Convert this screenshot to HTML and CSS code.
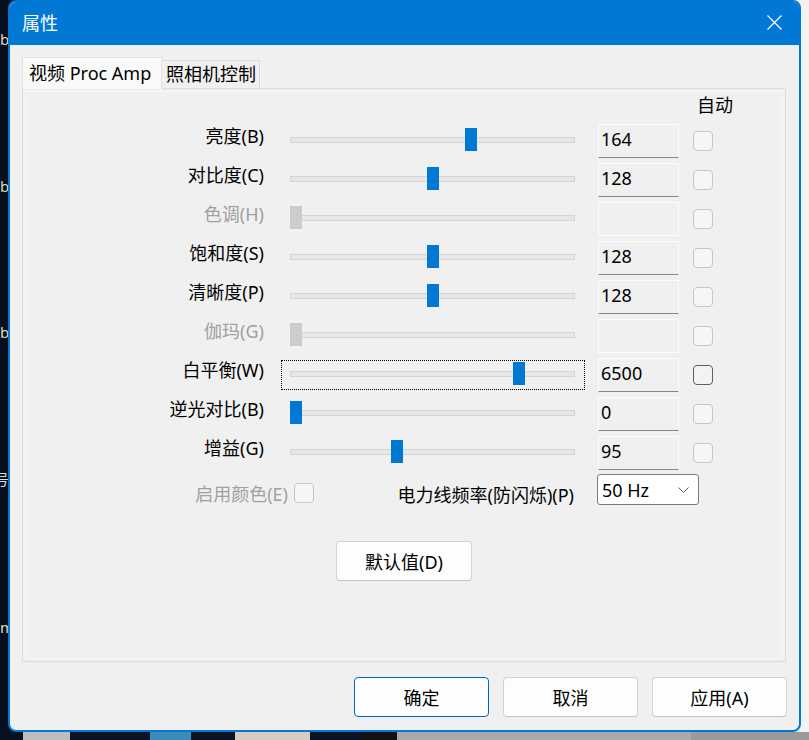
FILE: index.html
```html
<!DOCTYPE html>
<html lang="zh-CN">
<head>
<meta charset="utf-8">
<title>属性</title>
<link rel="stylesheet" href="styles.css">
</head>
<body>
<div class="desk">
  <div class="desk-left">
    <span class="frag f1">b</span>
    <span class="frag f2">b</span>
    <span class="frag f3">b</span>
    <span class="frag f4">号</span>
    <span class="frag f5">m</span>
  </div>
  <div class="window">
    <div class="titlebar">
      <span class="title">属性</span>
      <svg class="close" viewBox="0 0 15 15" aria-hidden="true"><path d="M0.5 0.5 L14.5 14.5 M14.5 0.5 L0.5 14.5" stroke="#fff" stroke-width="1.2" fill="none"/></svg>
    </div>
    <div class="body">
      <div class="tabs">
        <div class="tab active">视频 Proc Amp</div>
        <div class="tab">照相机控制</div>
      </div>
      <div class="panel">
        <div class="page">
          <div class="grid head"><span class="auto">自动</span></div>
          <div class="grid rows">
            <div class="label">亮度(B)</div>
            <div class="slider"><div class="track"><span class="thumb" style="left:175px"></span></div></div>
            <div class="edit">164</div>
            <div class="check"></div>

            <div class="label">对比度(C)</div>
            <div class="slider"><div class="track"><span class="thumb" style="left:137px"></span></div></div>
            <div class="edit">128</div>
            <div class="check"></div>

            <div class="label dis">色调(H)</div>
            <div class="slider"><div class="track"><span class="thumb dis" style="left:0px"></span></div></div>
            <div class="edit dis"></div>
            <div class="check"></div>

            <div class="label">饱和度(S)</div>
            <div class="slider"><div class="track"><span class="thumb" style="left:137px"></span></div></div>
            <div class="edit">128</div>
            <div class="check"></div>

            <div class="label">清晰度(P)</div>
            <div class="slider"><div class="track"><span class="thumb" style="left:137px"></span></div></div>
            <div class="edit">128</div>
            <div class="check"></div>

            <div class="label dis">伽玛(G)</div>
            <div class="slider"><div class="track"><span class="thumb dis" style="left:0px"></span></div></div>
            <div class="edit dis"></div>
            <div class="check"></div>

            <div class="label">白平衡(W)</div>
            <div class="slider focus"><div class="track"><span class="thumb" style="left:223px"></span></div></div>
            <div class="edit">6500</div>
            <div class="check hover"></div>

            <div class="label">逆光对比(B)</div>
            <div class="slider"><div class="track"><span class="thumb" style="left:0px"></span></div></div>
            <div class="edit">0</div>
            <div class="check"></div>

            <div class="label">增益(G)</div>
            <div class="slider"><div class="track"><span class="thumb" style="left:101px"></span></div></div>
            <div class="edit">95</div>
            <div class="check"></div>
          </div>
          <div class="extra">
            <div class="en">
              <span class="en-label">启用颜色(E)</span>
              <span class="check small"></span>
            </div>
            <div class="pf">电力线频率(防闪烁)(P)</div>
            <div class="select">
              <span>50 Hz</span>
              <svg class="chev" viewBox="0 0 11 6" aria-hidden="true"><path d="M0.5 0.5 L5.5 5.5 L10.5 0.5" stroke="#5a5a5a" stroke-width="1" fill="none"/></svg>
            </div>
          </div>
          <div class="defrow"><button class="btn def">默认值(D)</button></div>
        </div>
      </div>
      <div class="actions">
        <button class="btn primary">确定</button>
        <button class="btn">取消</button>
        <button class="btn">应用(A)</button>
      </div>
    </div>
  </div>
  <div class="desk-right"></div>
</div>
<div class="strip">
  <span class="seg s1"></span>
  <span class="seg s2"></span>
  <span class="seg s3"></span>
  <span class="seg s4"></span>
  <span class="seg s5"></span>
  <span class="seg s6"></span>
  <span class="seg s7"></span>
  <span class="seg s8"></span>
  <span class="seg s9"></span>
  <span class="seg s10"></span>
</div>
</body>
</html>
```

FILE: styles.css
```css
* { box-sizing: border-box; }
html, body { margin: 0; padding: 0; }
body {
  width: 809px;
  height: 740px;
  overflow: hidden;
  background: #08111f;
  font-family: "Noto Sans", "Noto Sans CJK SC", sans-serif;
  font-size: 18px;
  color: #000;
}

.desk {
  display: flex;
  height: 732px;
  background: linear-gradient(to right, #06101e 50%, #f2f2f2 50%);
}
.desk-left {
  width: 8px;
  position: relative;
  overflow: hidden;
  background: #06101e;
}
.desk-right { width: 8px; background: #f2f2f2; }
.frag {
  position: absolute;
  left: 0;
  font-size: 15px;
  line-height: 16px;
  color: #e8d6b8;
}
.f1 { top: 31px; }
.f2 { top: 178px; }
.f3 { top: 324px; }
.f4 { top: 471px; left: -6px; color: #d8d8d8; }
.f5 { top: 619px; }

.window {
  width: 793px;
  height: 732px;
  border: 2px solid #0078d4;
  border-radius: 8px;
  background: #f0f0f0;
  display: flex;
  flex-direction: column;
  overflow: hidden;
}
.titlebar {
  height: 43px;
  flex: none;
  background: #0078d4;
  color: #fff;
  display: flex;
  align-items: center;
  justify-content: space-between;
  padding: 0 17px 2px 12px;
}
.title { font-size: 18px; line-height: 24px; }
.close { width: 15px; height: 15px; display: block; }

.body {
  flex: 1;
  display: flex;
  flex-direction: column;
  padding: 12px 13px 0 12px;
}
.tabs {
  display: flex;
  align-items: flex-end;
  height: 31px;
  flex: none;
}
.tab {
  width: 98px;
  height: 28px;
  padding: 0 4px;
  border: 1px solid #dadada;
  border-bottom: none;
  border-left: none;
  background: #f0f0f0;
  line-height: 26px;
  white-space: nowrap;
}
.tab.active {
  width: 140px;
  height: 32px;
  margin-bottom: -1px;
  padding: 0 6px;
  border-left: 1px solid #e2e2e2;
  border-color: #e2e2e2;
  background: #f9f9f9;
  line-height: 30px;
  position: relative;
  z-index: 1;
}

.panel {
  height: 574px;
  flex: none;
  border: 1px solid #dcdcdc;
  padding: 2px;
}
.page {
  height: 100%;
  border: 1px solid #f8f8f8;
  display: flex;
  flex-direction: column;
}

.grid {
  display: grid;
  grid-template-columns: 242px 304px 81px 20px;
  column-gap: 13px;
}
.head { height: 32px; }
.auto {
  grid-column: 4;
  white-space: nowrap;
  margin-left: 5px;
  padding-top: 1px;
  line-height: 24px;
}
.rows {
  grid-auto-rows: 34px;
  row-gap: 5px;
}
.label {
  text-align: right;
  line-height: 24px;
  padding-right: 4px;
  white-space: nowrap;
}
.label.dis { color: #a0a0a0; }

.slider {
  margin-top: 2px;
  height: 30px;
  border: 1px dotted transparent;
  padding: 0 9px 0 8px;
}
.slider.focus { border-color: #000; }
.track {
  position: relative;
  margin-top: 10px;
  height: 6px;
  background: #e6e7e8;
  border: 1px solid #d4d4d4;
}
.thumb {
  position: absolute;
  top: -10px;
  margin-left: -1px;
  width: 12px;
  height: 23px;
  background: #0078d4;
}
.thumb.dis { background: #cccccc; }

.edit {
  height: 34px;
  border: 1px solid #fcfcfc;
  border-bottom-color: #878787;
  padding-left: 2px;
  line-height: 28px;
  background: #f0f0f0;
}
.edit.dis { border-bottom-color: #fcfcfc; }

.check {
  width: 20px;
  height: 20px;
  margin-top: 7px;
  margin-left: 1px;
  border: 1px solid #c6c6c6;
  border-radius: 4px;
  background: #f6f6f6;
}
.check.hover { border-color: #5f5f5f; background: #f3f3f3; }

.extra {
  display: flex;
  align-items: flex-start;
  margin-top: 4px;
  height: 31px;
}
.en {
  width: 288px;
  display: flex;
  justify-content: flex-end;
  gap: 6px;
}
.en-label {
  margin-top: 8px;
  line-height: 24px;
  color: #a0a0a0;
  white-space: nowrap;
}
.check.small { margin: 9px 0 0 0; display: block; }
.pf {
  width: 260px;
  margin-top: 9px;
  text-align: right;
  line-height: 24px;
  white-space: nowrap;
}
.select {
  margin-left: 23px;
  width: 102px;
  height: 31px;
  border: 1px solid #7a7a7a;
  border-radius: 3px;
  background: #fff;
  display: flex;
  align-items: center;
  justify-content: space-between;
  padding: 0 9px 0 4px;
  line-height: 24px;
}
.chev { width: 11px; height: 6px; display: block; }

.defrow {
  display: flex;
  justify-content: center;
  margin-top: 36px;
}
.btn {
  font-family: inherit;
  font-size: 18px;
  color: #000;
  width: 135px;
  height: 40px;
  padding: 0;
  background: #fdfdfd;
  border: 1px solid #d3d3d3;
  border-bottom-color: #c4c4c4;
  border-radius: 4px;
}
.btn.def { width: 136px; }
.btn.primary { border-color: #0067c0; }

.actions {
  display: flex;
  justify-content: flex-end;
  gap: 14px;
  margin-top: 15px;
  margin-right: -1px;
}

.strip { display: flex; height: 8px; }
.seg { display: block; height: 8px; }
.s1 { width: 23px; background: #081120; }
.s2 { width: 47px; background: #bdbdbd; }
.s3 { width: 80px; background: #0a1424; }
.s4 { width: 41px; background: #3b8cba; }
.s5 { width: 44px; background: #0a1424; }
.s6 { width: 75px; background: #d6ccc4; }
.s7 { width: 51px; background: #0a1424; }
.s8 { width: 36px; background: #121212; }
.s9 { width: 294px; background: #a9a9a9; }
.s10 { width: 118px; background: #9a9a9a; }
```
